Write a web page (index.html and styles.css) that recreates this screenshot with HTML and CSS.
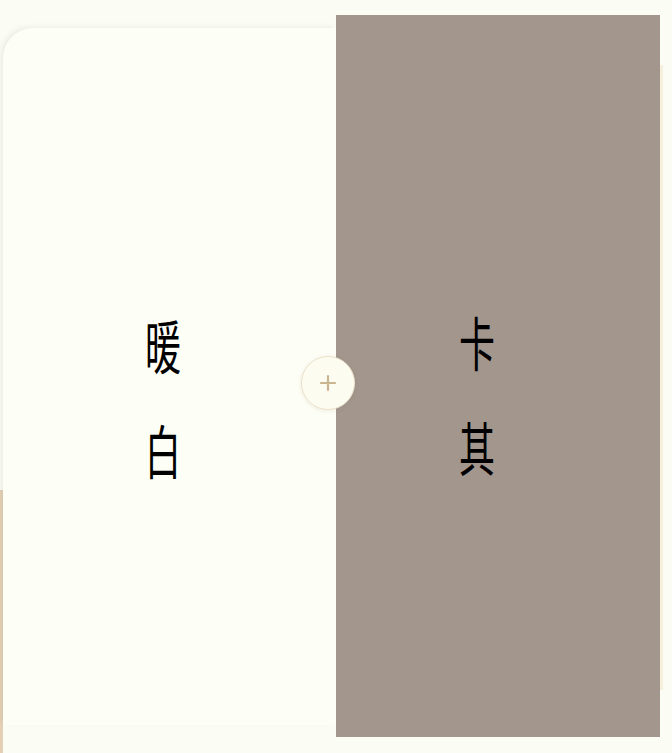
FILE: index.html
```html
<!DOCTYPE html>
<html lang="zh">
<head>
<meta charset="utf-8">
<title>暖白 卡其</title>
<link rel="stylesheet" href="styles.css">
</head>
<body>
<div class="stage">
  <div class="panel warm">
    <div class="label"><span>暖</span><span>白</span></div>
  </div>
  <div class="panel khaki">
    <div class="label"><span>卡</span><span>其</span></div>
  </div>
  <button class="add" aria-label="add">
    <svg width="20" height="20" viewBox="0 0 20 20"><path d="M10 3v14M3 10h14" stroke="#c9b690" stroke-width="2.2" fill="none" stroke-linecap="round"/></svg>
  </button>
</div>
</body>
</html>
```
FILE: styles.css
```css
html, body {
  margin: 0;
  padding: 0;
  background: #fbfcf4;
  font-family: "Noto Sans CJK SC", "Noto Sans", sans-serif;
}
.stage {
  position: relative;
  display: flex;
  align-items: flex-start;
  height: 753px;
  box-sizing: border-box;
  padding: 15px 12px 16px 3px;
}
.stage::before {
  content: "";
  position: absolute;
  left: 0;
  top: 490px;
  bottom: 0;
  width: 3px;
  background: #e3d0b5;
}
.stage::after {
  content: "";
  position: absolute;
  left: 660px;
  top: 65px;
  height: 625px;
  width: 3px;
  background: #f6efdc;
}
.panel {
  display: flex;
  align-items: center;
  justify-content: center;
  box-sizing: border-box;
}
.warm {
  position: relative;
  z-index: 1;
  width: 333px;
  height: 697px;
  margin-top: 13px;
  background: #fdfef6;
  border-top-left-radius: 30px;
  box-shadow: -3px -2px 5px -1px rgba(120, 120, 100, 0.12);
  padding: 39px 13px 0 0;
}
.khaki {
  width: 324px;
  height: 722px;
  background: #a2968d;
  padding: 34px 42px 0 0;
}
.label {
  display: flex;
  flex-direction: column;
  align-items: center;
  font-size: 36px;
  line-height: 66px;
  color: #000;
  transform: scale(1, 1.6);
}
.add {
  position: absolute;
  z-index: 2;
  left: 301px;
  top: 356px;
  width: 54px;
  height: 54px;
  border-radius: 50%;
  border: 1px solid #ece2cc;
  background: #fcfcf1;
  box-shadow: 0 1px 4px rgba(150, 130, 90, 0.15);
  display: flex;
  align-items: center;
  justify-content: center;
  padding: 0;
}
```
